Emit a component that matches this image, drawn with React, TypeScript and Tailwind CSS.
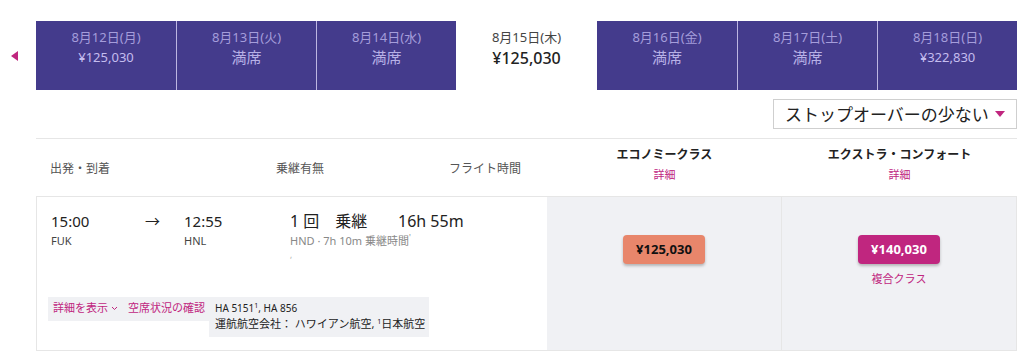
const DAYS = [
  { date: '8月12日(月)', value: '¥125,030', full: false },
  { date: '8月13日(火)', value: '満席', full: true },
  { date: '8月14日(水)', value: '満席', full: true },
  { date: '8月15日(木)', value: '¥125,030', full: false, active: true },
  { date: '8月16日(金)', value: '満席', full: true },
  { date: '8月17日(土)', value: '満席', full: true },
  { date: '8月18日(日)', value: '¥322,830', full: false },
];

export default function App() {
  return (
    <div
      className="w-[1024px] h-[357px] bg-white overflow-hidden"
      style={{ fontFamily: '"Noto Sans", "Noto Sans CJK JP", sans-serif' }}
    >
      {/* Date tabs */}
      <div className="flex pt-[21px]">
        <div className="w-[36px] flex items-center justify-center pr-[8px]">
          <div className="w-0 h-0 border-y-[5px] border-y-transparent border-r-[7px] border-r-[#c0267f]" />
        </div>
        <div className="flex w-[981px] h-[69px]">
          {DAYS.map((d, i) =>
            d.active ? (
              <div
                key={i}
                className="w-[141px] mt-[3px] bg-white rounded-t-[5px] flex flex-col items-center pt-[4px]"
              >
                <div className="text-[13px] text-[#444] leading-[18px]">{d.date}</div>
                <div className="text-[16px] text-[#222] font-medium leading-[22px] mt-[1px]">{d.value}</div>
              </div>
            ) : (
              <div
                key={i}
                className={`w-[140px] bg-[#443b8c] flex flex-col items-center pt-[7px] ${i !== 0 && !DAYS[i - 1].active ? 'border-l border-l-[#bdb6e2]' : ''}`}
              >
                <div className="text-[13px] text-[#a59ddb] leading-[18px]">{d.date}</div>
                {d.full ? (
                  <div className="text-[15px] text-[#b8b1e6] leading-[22px]">{d.value}</div>
                ) : (
                  <div className="text-[13px] text-[#c4bdef] leading-[22px]">{d.value}</div>
                )}
              </div>
            )
          )}
        </div>
      </div>

      <div className="ml-[36px] w-[981px]">
        {/* Sort dropdown */}
        <div className="flex justify-end pt-[9px] pb-[9px]">
          <div className="w-[244px] h-[30px] border border-[#cfcfcf] flex items-center pl-[11px] pr-[16px]">
            <span className="text-[17px] text-[#222] leading-none whitespace-nowrap flex-1">
              ストップオーバーの少ない
            </span>
            <div className="ml-[6px] w-0 h-0 border-x-[5px] border-x-transparent border-t-[6px] border-t-[#c0267f]" />
          </div>
        </div>

        {/* Header */}
        <div className="flex h-[58px] border-t border-[#e6e6e6]">
          <div className="w-[511px] flex items-center text-[12px] text-[#555] pt-[2px]">
            <span className="pl-[14px] w-[240px]">出発・到着</span>
            <span className="w-[173px]">乗継有無</span>
            <span>フライト時間</span>
          </div>
          <div className="w-[235px] flex flex-col items-center pt-[7px]">
            <span className="text-[12px] font-bold text-[#222] leading-[18px]">エコノミークラス</span>
            <span className="text-[11px] text-[#c0267f] mt-[3px]">詳細</span>
          </div>
          <div className="w-[235px] flex flex-col items-center pt-[7px]">
            <span className="text-[12px] font-bold text-[#222] leading-[18px]">エクストラ・コンフォート</span>
            <span className="text-[11px] text-[#c0267f] mt-[3px]">詳細</span>
          </div>
        </div>

        {/* Flight row */}
        <div className="flex h-[155px] border border-[#e6e6e6]">
          <div className="w-[510px] flex flex-col pt-[14px] pl-[14px]">
            <div className="flex">
              <div className="w-[94px]">
                <div className="text-[15px] text-[#222] leading-[20px]">15:00</div>
                <div className="text-[11px] text-[#444] mt-[2px]">FUK</div>
              </div>
              <div className="w-[39px] text-[15px] text-[#222] leading-[20px]">→</div>
              <div className="w-[106px]">
                <div className="text-[15px] text-[#222] leading-[20px]">12:55</div>
                <div className="text-[11px] text-[#444] mt-[2px]">HNL</div>
              </div>
              <div>
                <div className="flex text-[16px] text-[#222] leading-[20px]">
                  <span className="w-[108px] whitespace-pre">1 回　乗継</span>
                  <span>16h 55m</span>
                </div>
                <div className="text-[11px] text-[#888] mt-[2px]">HND · 7h 10m 乗継時間<sup className="text-[8px]">'</sup></div>
                <div className="text-[8px] text-[#aaa] leading-[10px]">,</div>
              </div>
            </div>
            <div className="flex items-start mt-[37px] -ml-[3px]">
              <div className="bg-[#f0f1f4] w-[161px] h-[24px] flex items-center gap-[10px] pl-[5px] text-[11px] text-[#c0267f] whitespace-nowrap">
                <span className="flex items-center gap-[3px]">
                  詳細を表示
                  <svg width="7" height="5" viewBox="0 0 7 5"><path d="M1 1l2.5 2.5L6 1" stroke="#c0267f" strokeWidth="1" fill="none" /></svg>
                </span>
                <span>空席状況の確認</span>
              </div>
              <div className="bg-[#f0f1f4] w-[220px] h-[40px] pl-[6px] pt-[3px] text-[#222]">
                <div className="text-[10px] leading-[16px]">HA 5151<sup className="text-[7px]">1</sup>, HA 856</div>
                <div className="text-[11px] leading-[16px]">運航航空会社： ハワイアン航空, <sup className="text-[7px]">1</sup>日本航空</div>
              </div>
            </div>
          </div>
          <div className="w-[235px] bg-[#f0f1f4] border-r border-[#e6e6e6] flex flex-col items-center pt-[38px]">
            <div className="w-[82px] h-[29px] rounded-[4px] bg-[#e8866b] shadow-[0_2px_3px_rgba(0,0,0,0.25)] flex items-center justify-center text-[13px] font-bold text-[#111]">
              ¥125,030
            </div>
          </div>
          <div className="flex-1 bg-[#f0f1f4] flex flex-col items-center pt-[38px]">
            <div className="w-[82px] h-[29px] rounded-[4px] bg-[#c0267f] shadow-[0_2px_3px_rgba(0,0,0,0.25)] flex items-center justify-center text-[13px] font-bold text-white">
              ¥140,030
            </div>
            <div className="text-[11px] text-[#c0267f] mt-[7px]">複合クラス</div>
          </div>
        </div>
      </div>
    </div>
  );
}
